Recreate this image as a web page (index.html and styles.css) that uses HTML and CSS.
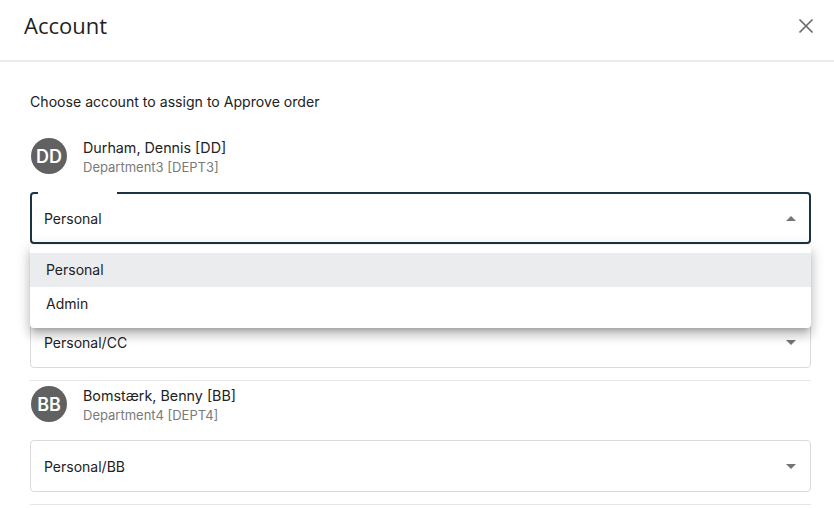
FILE: index.html
```html
<!DOCTYPE html>
<html lang="en">
<head>
<meta charset="utf-8">
<title>Account</title>
<link rel="stylesheet" href="styles.css">
</head>
<body>
<div class="dialog">
  <header class="dialog-header">
    <h1 class="dialog-title">Account</h1>
    <button class="close-btn" aria-label="Close">
      <svg width="16" height="16" viewBox="0 0 16 16"><path d="M1.5 1.5 L14.5 14.5 M14.5 1.5 L1.5 14.5" stroke="#6b6b6b" stroke-width="1.7" fill="none"/></svg>
    </button>
  </header>
  <main class="dialog-body">
    <p class="intro">Choose account to assign to Approve order</p>

    <section class="user-block">
      <div class="user-row">
        <div class="avatar">DD</div>
        <div class="user-text">
          <div class="user-name">Durham, Dennis [DD]</div>
          <div class="user-dept">Department3 [DEPT3]</div>
        </div>
      </div>
      <div class="select select-focused">
        <span class="notch"></span>
        <span class="select-value">Personal</span>
        <span class="arrow arrow-up"></span>
        <ul class="menu">
          <li class="menu-item menu-item-selected">Personal</li>
          <li class="menu-item">Admin</li>
        </ul>
      </div>
    </section>

    <section class="user-block">
      <div class="user-row covered">
        <div class="avatar">CC</div>
        <div class="user-text">
          <div class="user-name">Christensen, Carl [CC]</div>
          <div class="user-dept">Department2 [DEPT2]</div>
        </div>
      </div>
      <div class="select">
        <span class="select-value">Personal/CC</span>
        <span class="arrow"></span>
      </div>
    </section>

    <section class="user-block">
      <div class="user-row">
        <div class="avatar">BB</div>
        <div class="user-text">
          <div class="user-name">Bomstærk, Benny [BB]</div>
          <div class="user-dept">Department4 [DEPT4]</div>
        </div>
      </div>
      <div class="select">
        <span class="select-value">Personal/BB</span>
        <span class="arrow"></span>
      </div>
    </section>
  </main>
</div>
</body>
</html>
```

FILE: styles.css
```css
* { box-sizing: border-box; }
html, body { margin: 0; padding: 0; background: #ffffff; }
body { width: 834px; height: 508px; overflow: hidden; font-family: "Inter", "Liberation Sans", sans-serif; color: #222222; }

.dialog-header {
  height: 62px;
  border-bottom: 2px solid #ececec;
  display: flex;
  align-items: flex-start;
  justify-content: space-between;
  padding: 9px 20px 0 24px;
}
.dialog-title {
  margin: 0;
  font-family: "Open Sans", "Liberation Sans", sans-serif;
  font-weight: 400;
  font-size: 22px;
  line-height: 32px;
  color: #1f1f1f;
}
.close-btn {
  border: 0;
  background: none;
  padding: 0;
  margin-top: 9px;
  width: 16px;
  height: 16px;
  cursor: pointer;
}
.close-btn svg { display: block; }

.dialog-body { padding: 0 23px 0 30px; }
.intro {
  margin: 30px 0 21px;
  font-size: 14.1px;
  line-height: 20px;
  color: #222222;
}

.user-block {
  padding: 5px 0 12px;
  border-bottom: 1px solid #e6e6e6;
}
.user-row {
  display: flex;
  align-items: flex-start;
  gap: 16px;
  height: 36px;
  margin-bottom: 18px;
}
.user-row.covered { visibility: hidden; }
.avatar {
  width: 36px;
  height: 36px;
  border-radius: 50%;
  background: #616161;
  color: #ffffff;
  display: flex;
  align-items: center;
  justify-content: center;
  font-size: 18px;
  font-weight: 600;
  flex: none;
  margin-left: 1px;
}
.user-text { padding-top: 1px; }
.user-name { font-size: 14.3px; line-height: 18px; color: #222222; }
.user-dept { font-size: 13px; line-height: 20px; color: #7a7a7a; }

.select {
  position: relative;
  height: 52px;
  border: 1px solid #dadada;
  border-radius: 4px;
  display: flex;
  align-items: center;
  justify-content: space-between;
  padding: 0 14px 0 13px;
  font-size: 14px;
}
.select-focused {
  border: 2px solid #1c3442;
  padding: 0 13px 0 12px;
}
.select-focused .select-value { padding-top: 1px; }
.notch {
  position: absolute;
  top: -2px;
  left: 6px;
  width: 79px;
  height: 2px;
  background: #ffffff;
}
.select-value { color: #222222; }
.arrow {
  width: 0;
  height: 0;
  border-left: 5px solid transparent;
  border-right: 5px solid transparent;
  border-top: 5px solid #757575;
}
.arrow-up {
  border-top: 0;
  border-bottom: 5px solid #757575;
}

.menu {
  position: absolute;
  top: calc(100% + 3px);
  left: -2px;
  right: -2px;
  margin: 0;
  padding: 8px 0 7px;
  list-style: none;
  background: #ffffff;
  border-radius: 4px;
  box-shadow: 0 5px 5px -3px rgba(0,0,0,0.2), 0 8px 10px 1px rgba(0,0,0,0.14), 0 3px 14px 2px rgba(0,0,0,0.12);
  z-index: 10;
}
.menu-item {
  height: 34px;
  line-height: 34px;
  padding-left: 16px;
  font-size: 14px;
  color: #222222;
}
.menu-item-selected { background: #ebecee; }
```
